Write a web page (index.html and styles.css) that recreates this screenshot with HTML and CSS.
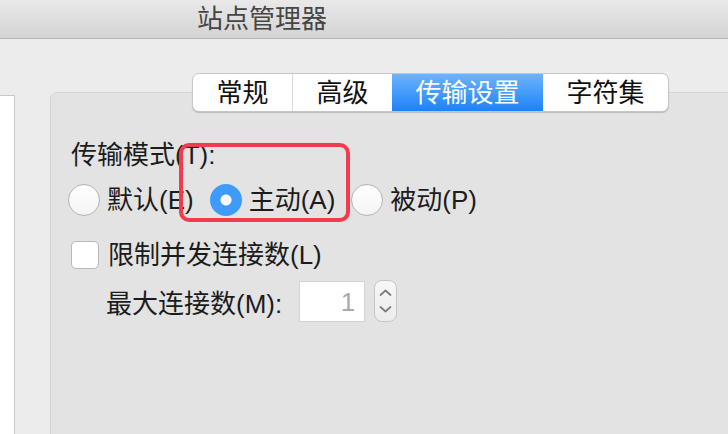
FILE: index.html
```html
<!DOCTYPE html>
<html lang="zh-CN">
<head>
    <meta charset="UTF-8">
    <meta name="viewport" content="width=device-width, initial-scale=1.0">
    <title>站点管理器</title>
    <link rel="stylesheet" href="styles.css">
</head>
<body>
    <header class="titlebar">
        <span class="title">站点管理器</span>
    </header>

    <div class="content">
        <aside class="site-list"></aside>

        <main class="settings">
            <nav class="tabs">
                <button class="tab">常规</button>
                <button class="tab">高级</button>
                <button class="tab active">传输设置</button>
                <button class="tab">字符集</button>
            </nav>

            <section class="group">
                <div class="field-label">传输模式(T):</div>
                <div class="radio-row">
                    <label class="option"><span class="radio"></span>默认(E)</label>
                    <label class="option"><span class="radio checked"></span>主动(A)</label>
                    <label class="option"><span class="radio"></span>被动(P)</label>
                </div>

                <label class="check-row"><span class="checkbox"></span>限制并发连接数(L)</label>

                <div class="max-row">
                    <span>最大连接数(M):</span>
                    <span class="num-input">1</span>
                    <span class="stepper">
                        <svg width="23" height="42" viewBox="0 0 23 42">
                            <path d="M6.5 15 L11.5 10.5 L16.5 15" fill="none" stroke="#7c7c7c" stroke-width="1.7" stroke-linecap="round" stroke-linejoin="round"/>
                            <path d="M6.5 27 L11.5 31.5 L16.5 27" fill="none" stroke="#7c7c7c" stroke-width="1.7" stroke-linecap="round" stroke-linejoin="round"/>
                        </svg>
                    </span>
                </div>

                <!-- annotation box round the selected option -->
                <div class="highlight"></div>
            </section>
        </main>
    </div>
</body>
</html>
```

FILE: styles.css
```css
body {
    font-family: "Liberation Sans", "Noto Sans CJK SC", sans-serif;
    margin: 0;
    padding: 0;
    height: 434px;
    overflow: hidden;
    background-color: #ececec;
    color: #1c1c1c;
    font-size: 26px;
}
.titlebar {
    height: 38px;
    display: flex;
    align-items: center;
    padding-left: 197px;
    background: linear-gradient(#e9e9e9, #d3d3d3);
    border-bottom: 1px solid #b4b4b4;
}
.title {
    color: #454545;
    line-height: 1;
}
.content {
    display: flex;
}
.site-list {
    width: 14px;
    height: 400px;
    margin-top: 56px;
    background-color: #fff;
    border-top: 1px solid #c8c8c8;
    border-right: 1px solid #c8c8c8;
}
.settings {
    flex: 1;
    margin-left: 35px;
    margin-right: -30px;
}
.tabs {
    position: relative;
    z-index: 1;
    display: flex;
    margin: 34px 0 0 142px;
    width: max-content;
    height: 39px;
    border: 1px solid #c6c6c6;
    border-radius: 7px;
    background-color: #fff;
    box-shadow: 0 1px 1px rgba(0, 0, 0, 0.18);
    overflow: hidden;
    box-sizing: border-box;
}
.tab {
    font-family: inherit;
    font-size: 26px;
    color: #111;
    padding: 0 23.5px;
    border: none;
    border-left: 1px solid #dadada;
    background: none;
    line-height: 1;
}
.tab:first-child {
    border-left: none;
}
.tab.active {
    color: #fff;
    border-left: none;
    background: linear-gradient(#6db4fb, #1b82fb);
}
.tab.active + .tab {
    border-left: none;
}
.group {
    position: relative;
    margin-top: -20px;
    height: 380px;
    padding: 47px 0 0 20px;
    background-color: #e3e3e3;
    border: 1px solid #d4d4d4;
    border-radius: 7px;
    box-sizing: border-box;
}
.field-label {
    line-height: 30px;
}
.radio-row {
    display: flex;
    gap: 16px;
    margin-top: 14px;
    margin-left: -3px;
    line-height: 32px;
}
.option {
    display: flex;
    align-items: center;
    gap: 7px;
}
.radio {
    width: 32px;
    height: 32px;
    border-radius: 50%;
    border: 1px solid #b4b4b4;
    background: linear-gradient(#fff, #f4f4f4);
    box-sizing: border-box;
}
.radio.checked {
    border: none;
    background: radial-gradient(circle, #fff 0, #fff 5px, #3e9bfc 6px);
}
.check-row {
    display: flex;
    align-items: center;
    gap: 9px;
    margin-top: 24px;
    line-height: 30px;
}
.checkbox {
    width: 28px;
    height: 28px;
    border: 1px solid #b8b8b8;
    border-radius: 5px;
    background-color: #fff;
    box-sizing: border-box;
}
.max-row {
    display: flex;
    align-items: center;
    margin: 10px 0 0 35px;
}
.num-input {
    width: 66px;
    height: 41px;
    margin-left: 17px;
    padding-right: 9px;
    box-sizing: border-box;
    background-color: #fff;
    border: 1px solid #d2d2d2;
    color: #a9a9a9;
    text-align: right;
    line-height: 40px;
}
.stepper {
    display: flex;
    width: 23px;
    height: 42px;
    margin-left: 9px;
    border: 1px solid #c6c6c6;
    border-radius: 8px;
    background: linear-gradient(#f7f7f7, #ececec);
    box-sizing: border-box;
    overflow: hidden;
}
.stepper svg {
    margin: -1px;
}
.highlight {
    position: absolute;
    left: 128px;
    top: 50px;
    width: 171px;
    height: 79px;
    border: 4px solid #f23c4e;
    border-radius: 10px;
    box-sizing: border-box;
}
```
